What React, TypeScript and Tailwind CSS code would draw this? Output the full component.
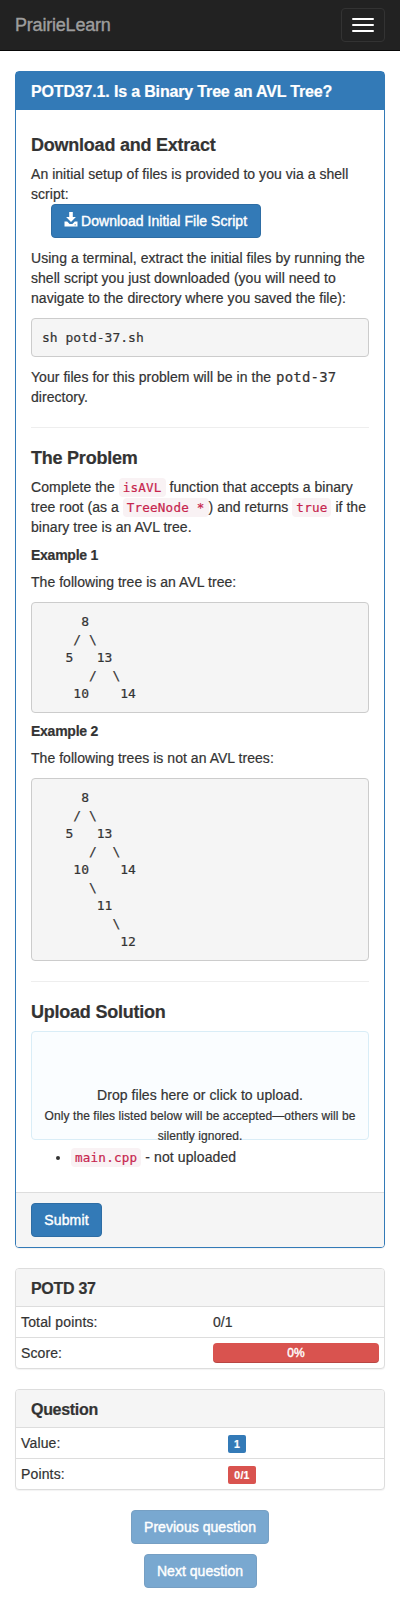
import type { ReactNode } from 'react';

const treeOne = `     8
    / \\
   5   13
      /  \\
    10    14`;

const treeTwo = `     8
    / \\
   5   13
      /  \\
    10    14
      \\
       11
         \\
          12`;

function Code({ children }: { children: ReactNode }) {
  return (
    <code className="rounded bg-[#f9f2f4] px-1 py-0.5 font-['DejaVu_Sans_Mono',monospace] text-[12.6px] leading-none tracking-[0.2px] text-[#c7254e] [-webkit-text-stroke:0.2px_#c7254e]">
      {children}
    </code>
  );
}

function Pre({ children }: { children: ReactNode }) {
  return (
    <pre className="mb-[10px] rounded border border-[#ccc] bg-[#f5f5f5] p-[9.5px] pl-[10px] font-['DejaVu_Sans_Mono',monospace] text-[13px] leading-[18px] tracking-normal text-[#333]">
      {children}
    </pre>
  );
}

function Heading({ children }: { children: ReactNode }) {
  return <h4 className="mb-[9px] pt-px text-[18px] leading-[19px] font-bold tracking-[-0.23px]">{children}</h4>;
}

function SubHeading({ children }: { children: ReactNode }) {
  return <h5 className="mb-[9px] pt-px text-[14px] leading-[15px] font-bold tracking-[-0.25px]">{children}</h5>;
}

function Panel({ title, children }: { title: string; children: ReactNode }) {
  return (
    <section className="mb-5 rounded border border-[#ddd] bg-white shadow-[0_1px_1px_rgba(0,0,0,0.05)]">
      <h3 className="rounded-t-[3px] bg-[#f5f5f5] px-[15px] pt-[11px] pb-[9px] text-[16px] leading-[17px] font-bold tracking-[-0.3px]">
        {title}
      </h3>
      {children}
    </section>
  );
}

const button = 'h-[34px] rounded border border-[#2e6da4] bg-[#337ab7] px-3 text-[14px] leading-5 text-white [-webkit-text-stroke:0.4px_white]';
const row = 'flex h-[31px] items-center border-t border-[#ddd] px-[5px]';

export default function App() {
  return (
    <div className="h-[1598px] w-full bg-white font-['Liberation_Sans',Arial,sans-serif] text-[14px] leading-5 tracking-[0.04px] text-[#333] [-webkit-text-stroke:0.2px]">
      <nav className="mb-5 flex h-[51px] items-start justify-between border-b border-[#080808] bg-[#222] px-[15px]">
        <a className="pt-[15px] text-[18px] leading-5 tracking-[-0.2px] text-[#9d9d9d] [-webkit-text-stroke:0.4px_#9d9d9d]">PrairieLearn</a>
        <button className="mt-2 flex h-[34px] w-11 flex-col items-center justify-center gap-1 rounded border border-[#333]" aria-label="Menu">
          <span className="h-0.5 w-[22px] rounded-[1px] bg-white" />
          <span className="h-0.5 w-[22px] rounded-[1px] bg-white" />
          <span className="h-0.5 w-[22px] rounded-[1px] bg-white" />
        </button>
      </nav>

      <main className="px-[15px]">
        <section className="mb-5 rounded border border-[#337ab7] bg-white shadow-[0_1px_1px_rgba(0,0,0,0.05)]">
          <h3 className="bg-[#337ab7] px-[15px] pt-[11px] pb-[10px] text-[16px] leading-[17px] font-bold tracking-[-0.16px] text-white">
            POTD37.1. Is a Binary Tree an AVL Tree?
          </h3>
          <div className="h-[1082px] px-[15px] pt-[25px]">
            <Heading>Download and Extract</Heading>
            <p>
              An initial setup of files is provided to you via a shell
              <br />
              script:
            </p>
            <button className={`${button} mb-[10px] ml-5 flex w-[210px] items-center whitespace-nowrap tracking-[0.04px]`}>
              <svg className="mt-[-3px] mr-[3px] h-[15px] w-[14px] shrink-0" viewBox="0 0 14 15" fill="currentColor" stroke="none">
                <path d="M5.2 0h3.6v5h3.1L7 10 2.1 5h3.1zM.5 9.5h2.7L5.6 12h2.8l2.4-2.5h2.7V14.5H.5zM10.5 12.5v.8H12v-.8z" fillRule="evenodd" />
              </svg>
              Download Initial File Script
            </button>
            <p className="mb-[10px]">
              Using a terminal, extract the initial files by running the
              <br />
              shell script you just downloaded (you will need to
              <br />
              navigate to the directory where you saved the file):
            </p>
            <Pre>sh potd-37.sh</Pre>
            <p className="mb-5">
              Your files for this problem will be in the{' '}
              <span className="ml-px font-['DejaVu_Sans_Mono',monospace] leading-none tracking-[0.2px]">potd-37</span>
              <br />
              directory.
            </p>
            <hr className="mb-5 border-[#eee]" />
            <Heading>The Problem</Heading>
            <p className="mb-[10px] whitespace-nowrap">
              Complete the <Code>isAVL</Code> function that accepts a binary
              <br />
              tree root (as a <Code>TreeNode *</Code>) and returns <Code>true</Code> if the
              <br />
              binary tree is an AVL tree.
            </p>
            <SubHeading>Example 1</SubHeading>
            <p className="mb-[10px]">The following tree is an AVL tree:</p>
            <Pre>{treeOne}</Pre>
            <SubHeading>Example 2</SubHeading>
            <p className="mb-[10px]">The following trees is not an AVL trees:</p>
            <Pre>{treeTwo}</Pre>
            <hr className="mt-5 mb-5 border-[#eee]" />
            <Heading>Upload Solution</Heading>
            <div className="mb-[7px] h-[109px] rounded border border-[#d9edf7] bg-[#fafdff] pt-[53px] text-center">
              <p className="tracking-[0.06px]">Drop files here or click to upload.</p>
              <p className="pt-px text-[12px] leading-5 tracking-[0.08px]">
                Only the files listed below will be accepted—others will be
                <br />
                silently ignored.
              </p>
            </div>
            <ul className="list-disc pl-10">
              <li className="tracking-[0.1px]">
                <Code>main.cpp</Code> - not uploaded
              </li>
            </ul>
          </div>
          <div className="rounded-b-[3px] border-t border-[#ddd] bg-[#f5f5f5] px-[15px] py-[10px]">
            <button className={`${button} block w-[71px] tracking-[0.15px]`}>Submit</button>
          </div>
        </section>

        <Panel title="POTD 37">
          <div className={row}>
            <span className="w-[192px] tracking-[0.15px]">Total points:</span>
            <span>0/1</span>
          </div>
          <div className={row}>
            <span className="w-[192px] tracking-[0.1px]">Score:</span>
            <div className="h-5 flex-1 rounded bg-[#d9534f] text-center text-[12px] leading-5 text-white shadow-[inset_0_-1px_0_rgba(0,0,0,0.15)] [-webkit-text-stroke:0.4px_white]">
              0%
            </div>
          </div>
        </Panel>

        <Panel title="Question">
          <div className={row}>
            <span className="w-[207px] tracking-[0.15px]">Value:</span>
            <span className="mt-0.5 h-[18px] rounded-[2px] bg-[#337ab7] px-1.5 text-[10.5px] leading-[19px] font-bold text-white">1</span>
          </div>
          <div className={row}>
            <span className="w-[207px] tracking-[0.15px]">Points:</span>
            <span className="mt-0.5 h-[18px] w-7 rounded-[2px] bg-[#d9534f] text-center text-[10.5px] leading-[19px] font-bold tracking-[0.3px] text-white">0/1</span>
          </div>
        </Panel>

        <div className="flex flex-col items-center gap-[10px]">
          <button className={`${button} w-[138px] px-0 opacity-65`} disabled>Previous question</button>
          <button className={`${button} w-[113px] px-0 opacity-65`} disabled>Next question</button>
        </div>
      </main>
    </div>
  );
}
